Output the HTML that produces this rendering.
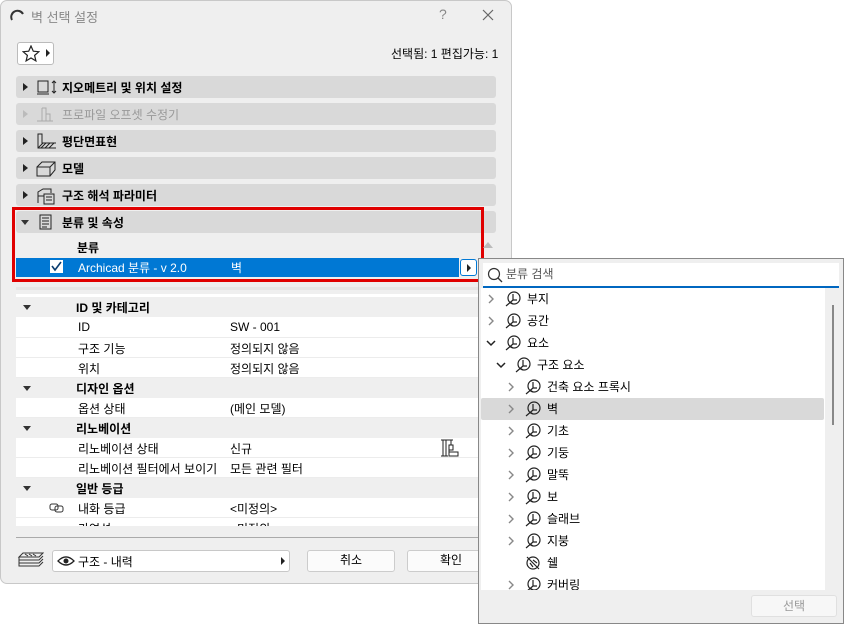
<!DOCTYPE html>
<html><head><meta charset="utf-8"><style>
*{box-sizing:border-box;margin:0;padding:0}
body{width:844px;height:624px;background:#fff;position:relative;overflow:hidden;font-family:"Liberation Sans","Noto Sans CJK KR",sans-serif;font-size:12px;color:#000}
.a{position:absolute}
.dlg{left:0;top:0;width:512px;height:584px;background:#efefef;border:1px solid #c8c8c8;border-radius:7px}
.ph{left:16px;width:480px;height:22px;background:#d9d9d9;border-radius:3px}
.ph .t{position:absolute;left:46px;top:3px;font-weight:bold;font-size:12px}
.tri{position:absolute;left:7px;top:7px;width:0;height:0;border-left:5px solid #222;border-top:4px solid transparent;border-bottom:4px solid transparent}
.trd{position:absolute;width:0;height:0;border-top:5px solid #333;border-left:4px solid transparent;border-right:4px solid transparent}
.row{left:16px;width:462px;height:20px;background:#fff;border-bottom:1px solid #ececec}
.hrow{left:16px;width:462px;height:20px;background:#efefef}
.row span,.hrow span{position:absolute;top:2px}
.li{left:481px;width:343px;height:22px}
.li .chev{position:absolute;top:6px}
.li .ic{position:absolute;top:3px}
.li .tx{position:absolute;top:2px}
</style></head><body>
<div class="a dlg"></div>
<svg class="a" style="left:10px;top:9px" width="14" height="12"><path d="M2 11 A6 6 0 0 1 13 5" stroke="#333" stroke-width="2" fill="none"/></svg>
<div class="a" style="left:31px;top:7px;color:#888;font-size:13px">벽 선택 설정</div>
<div class="a" style="left:439px;top:6px;color:#888;font-size:14px">?</div>
<svg class="a" style="left:482px;top:9px" width="12" height="12"><path d="M1 1L11 11M11 1L1 11" stroke="#666" stroke-width="1.2"/></svg>
<div class="a" style="left:17px;top:42px;width:37px;height:23px;background:#fff;border:1px solid #bbb;border-radius:3px"></div>
<svg class="a" style="left:22px;top:45px" width="18" height="17"><path d="M9 1l2.3 5.2 5.6.5-4.3 3.7 1.3 5.5L9 13l-4.9 2.9 1.3-5.5L1.1 6.7l5.6-.5z" fill="none" stroke="#222" stroke-width="1.2"/></svg>
<div class="a" style="left:46px;top:49px;width:0;height:0;border-left:4px solid #222;border-top:4px solid transparent;border-bottom:4px solid transparent"></div>
<div class="a" style="left:391px;top:45px">선택됨: 1 편집가능: 1</div>
<div class="a ph" style="top:76px"><div class="tri"></div><svg class="a" style="left:20px;top:3px" width="22" height="17"><rect x="2" y="2" width="10" height="11" fill="none" stroke="#222"/><path d="M1 15h12M18 2v12M16 4l2-2 2 2M16 12l2 2 2-2" stroke="#222" fill="none"/></svg><div class="t">지오메트리 및 위치 설정</div></div>
<div class="a ph" style="top:103px"><div class="tri" style="border-left-color:#bbb"></div><svg class="a" style="left:20px;top:3px" width="22" height="17"><path d="M6 2h4v13M6 2v13M1 15h16M10 8h4v7" stroke="#aaa" fill="none"/></svg><div class="t" style="color:#999;font-weight:normal">프로파일 오프셋 수정기</div></div>
<div class="a ph" style="top:130px"><div class="tri"></div><svg class="a" style="left:20px;top:3px" width="22" height="17"><path d="M2 1v14h18M2 15l5-5M5 15l5-5M9 15l5-5M13 15l5-5M2 10V1h4v9h14" stroke="#222" fill="none"/></svg><div class="t">평단면표현</div></div>
<div class="a ph" style="top:157px"><div class="tri"></div><svg class="a" style="left:20px;top:3px" width="22" height="17"><path d="M1 7h13v9H1zM1 7l5-5h13v8l-5 6M14 7l5-5" stroke="#222" fill="none"/></svg><div class="t">모델</div></div>
<div class="a ph" style="top:184px"><div class="tri"></div><svg class="a" style="left:20px;top:3px" width="22" height="18"><path d="M2 16V5l5-3h8v4M2 9h6M8 7h10v10H8zM10 10h6M10 13h6" stroke="#222" fill="none"/></svg><div class="t">구조 해석 파라미터</div></div>
<div class="a ph" style="top:211px"><div class="trd" style="left:5px;top:9px"></div><svg class="a" style="left:22px;top:3px" width="16" height="17"><rect x="2" y="1" width="11" height="14" fill="none" stroke="#222"/><path d="M4 4h7M4 7h7M4 10h7M4 13h5" stroke="#222"/></svg><div class="t">분류 및 속성</div></div>
<div class="a" style="left:77px;top:239px;font-weight:bold">분류</div>
<div class="a" style="left:16px;top:258px;width:443px;height:19px;background:#0078d4"></div>
<div class="a" style="left:50px;top:260px;width:13px;height:13px;background:#fff;border:1px solid #fff"></div>
<svg class="a" style="left:50px;top:260px" width="13" height="13"><path d="M2 6l3 4 6-8" stroke="#0a3c6e" stroke-width="1.6" fill="none"/></svg>
<div class="a" style="left:78px;top:259px;color:#fff">Archicad 분류 - v 2.0</div>
<div class="a" style="left:231px;top:259px;color:#fff">벽</div>
<div class="a" style="left:460px;top:259px;width:17px;height:17px;background:#fff;border:1px solid #0078d4;border-radius:3px"></div>
<div class="a" style="left:467px;top:264px;width:0;height:0;border-left:4px solid #222;border-top:4px solid transparent;border-bottom:4px solid transparent"></div>
<div class="a" style="left:12px;top:207px;width:472px;height:75px;border:3px solid #e00000"></div>
<div class="a" style="left:483px;top:242px;width:0;height:0;border-bottom:6px solid #bbb;border-left:5px solid transparent;border-right:5px solid transparent"></div>
<div class="a" style="left:16px;top:287px;width:462px;height:3px;background:#e6e6e6"></div>
<div class="a" style="left:16px;top:294px;width:462px;height:232px;background:#fff;overflow:hidden"></div>
<div class="a hrow" style="top:297px"><div class="trd" style="left:7px;top:8px"></div><span style="left:60px;font-weight:bold">ID 및 카테고리</span></div>
<div class="a row" style="top:318px"><span style="left:62px">ID</span><span style="left:214px">SW - 001</span></div>
<div class="a row" style="top:338px"><span style="left:62px">구조 기능</span><span style="left:214px">정의되지 않음</span></div>
<div class="a row" style="top:358px"><span style="left:62px">위치</span><span style="left:214px">정의되지 않음</span></div>
<div class="a hrow" style="top:378px"><div class="trd" style="left:7px;top:8px"></div><span style="left:60px;font-weight:bold">디자인 옵션</span></div>
<div class="a row" style="top:398px"><span style="left:62px">옵션 상태</span><span style="left:214px">(메인 모델)</span></div>
<div class="a hrow" style="top:418px"><div class="trd" style="left:7px;top:8px"></div><span style="left:60px;font-weight:bold">리노베이션</span></div>
<div class="a row" style="top:438px"><span style="left:62px">리노베이션 상태</span><span style="left:214px">신규</span><svg class="a" style="left:424px;top:1px" width="20" height="18"><path d="M1 1h12M3 1v16M6 1v16M1 17h7M11 1v5M9 6h4v5h-4zM9 11v6h9v-4h-9" stroke="#222" fill="none"/></svg></div>
<div class="a row" style="top:458px"><span style="left:62px">리노베이션 필터에서 보이기</span><span style="left:214px">모든 관련 필터</span></div>
<div class="a hrow" style="top:478px"><div class="trd" style="left:7px;top:8px"></div><span style="left:60px;font-weight:bold">일반 등급</span></div>
<div class="a row" style="top:498px"><svg class="a" style="left:33px;top:5px" width="16" height="10"><rect x="1" y="1" width="8" height="6" rx="2" fill="none" stroke="#333"/><rect x="6" y="3" width="8" height="6" rx="2" fill="none" stroke="#333"/></svg><span style="left:62px">내화 등급</span><span style="left:214px">&lt;미정의&gt;</span></div>
<div class="a" style="left:16px;top:518px;width:462px;height:8px;background:#fff;overflow:hidden"><span class="a" style="left:62px;top:2px">가연성</span><span class="a" style="left:214px;top:2px">&lt;미정의&gt;</span></div>
<div class="a" style="left:16px;top:537px;width:462px;height:1px;background:#aaa"></div>
<svg class="a" style="left:17px;top:551px" width="27" height="20"><path d="M6 2h20l-4 4H2zM2 6v3h20l4-4M2 9v3h20l4-4M2 12v3h20l4-4M8 3l3 2M12 3l3 2M16 3l3 2" stroke="#333" fill="none"/></svg>
<div class="a" style="left:52px;top:550px;width:238px;height:22px;background:#fff;border:1px solid #c8c8c8;border-radius:3px"></div>
<svg class="a" style="left:57px;top:555px" width="18" height="12"><path d="M1 6Q9-2 17 6Q9 14 1 6z" fill="none" stroke="#222" stroke-width="1.3"/><circle cx="9" cy="6" r="2.5" fill="#222"/></svg>
<div class="a" style="left:78px;top:553px">구조 - 내력</div>
<div class="a" style="left:281px;top:557px;width:0;height:0;border-left:4px solid #222;border-top:4px solid transparent;border-bottom:4px solid transparent"></div>
<div class="a" style="left:307px;top:550px;width:88px;height:22px;background:#fbfbfb;border:1px solid #ccc;border-radius:3px;text-align:center;line-height:19px">취소</div>
<div class="a" style="left:407px;top:550px;width:88px;height:22px;background:#fbfbfb;border:1px solid #ccc;border-radius:3px;text-align:center;line-height:19px">확인</div>
<div class="a" style="left:478px;top:258px;width:366px;height:366px;background:#efefef;border:1px solid #888"></div>
<div class="a" style="left:483px;top:263px;width:356px;height:25px;background:#fff;border-bottom:2px solid #0067c0"></div>
<svg class="a" style="left:487px;top:267px" width="16" height="16"><circle cx="7" cy="7" r="5.5" fill="none" stroke="#333" stroke-width="1.2"/><path d="M11 11l4 4" stroke="#333" stroke-width="1.3"/></svg>
<div class="a" style="left:506px;top:265px;color:#555">분류 검색</div>
<div class="a" style="left:481px;top:288px;width:344px;height:302px;background:#fff;overflow:hidden">
<div class="a" style="left:0;top:110px;width:343px;height:22px;background:#d9d9d9;border-radius:2px"></div>
</div>
<div class="a" style="left:832px;top:305px;width:2px;height:120px;background:#888"></div>
<div class="a" style="left:751px;top:595px;width:86px;height:22px;background:#f7f7f7;border:1px solid #e0e0e0;border-radius:3px;text-align:center;line-height:20px;color:#999">선택</div>
<svg width="0" height="0" style="position:absolute"><defs>
<g id="ci"><circle cx="9" cy="7" r="6" fill="none" stroke="#222" stroke-width="1.2"/><path d="M1 15L8 9M8 3v6h4M5 11l3 2" stroke="#222" stroke-width="1.2" fill="none"/></g>
<path id="cr" d="M1 1l4 4-4 4" stroke="#888" stroke-width="1.4" fill="none"/>
<path id="cd" d="M1 1l4 4 4-4" stroke="#222" stroke-width="1.5" fill="none"/>
</defs></svg>
<div class="a" style="left:481px;top:288px;width:344px;height:302px;overflow:hidden">
<div class="a li" style="left:0;top:0"><svg class="chev" style="left:7px" width="8" height="11"><use href="#cr"/></svg><svg class="ic" style="left:24px" width="17" height="16"><use href="#ci"/></svg><span class="tx" style="left:46px">부지</span></div>
<div class="a li" style="left:0;top:22px"><svg class="chev" style="left:7px" width="8" height="11"><use href="#cr"/></svg><svg class="ic" style="left:24px" width="17" height="16"><use href="#ci"/></svg><span class="tx" style="left:46px">공간</span></div>
<div class="a li" style="left:0;top:44px"><svg class="chev" style="left:5px;top:8px" width="11" height="8"><use href="#cd"/></svg><svg class="ic" style="left:24px" width="17" height="16"><use href="#ci"/></svg><span class="tx" style="left:46px">요소</span></div>
<div class="a li" style="left:0;top:66px"><svg class="chev" style="left:15px;top:8px" width="11" height="8"><use href="#cd"/></svg><svg class="ic" style="left:34px" width="17" height="16"><use href="#ci"/></svg><span class="tx" style="left:56px">구조 요소</span></div>
<div class="a li" style="left:0;top:88px"><svg class="chev" style="left:27px" width="8" height="11"><use href="#cr"/></svg><svg class="ic" style="left:44px" width="17" height="16"><use href="#ci"/></svg><span class="tx" style="left:66px">건축 요소 프록시</span></div>
<div class="a li" style="left:0;top:110px"><svg class="chev" style="left:27px" width="8" height="11"><use href="#cr"/></svg><svg class="ic" style="left:44px" width="17" height="16"><use href="#ci"/></svg><span class="tx" style="left:66px">벽</span></div>
<div class="a li" style="left:0;top:132px"><svg class="chev" style="left:27px" width="8" height="11"><use href="#cr"/></svg><svg class="ic" style="left:44px" width="17" height="16"><use href="#ci"/></svg><span class="tx" style="left:66px">기초</span></div>
<div class="a li" style="left:0;top:154px"><svg class="chev" style="left:27px" width="8" height="11"><use href="#cr"/></svg><svg class="ic" style="left:44px" width="17" height="16"><use href="#ci"/></svg><span class="tx" style="left:66px">기둥</span></div>
<div class="a li" style="left:0;top:176px"><svg class="chev" style="left:27px" width="8" height="11"><use href="#cr"/></svg><svg class="ic" style="left:44px" width="17" height="16"><use href="#ci"/></svg><span class="tx" style="left:66px">말뚝</span></div>
<div class="a li" style="left:0;top:198px"><svg class="chev" style="left:27px" width="8" height="11"><use href="#cr"/></svg><svg class="ic" style="left:44px" width="17" height="16"><use href="#ci"/></svg><span class="tx" style="left:66px">보</span></div>
<div class="a li" style="left:0;top:220px"><svg class="chev" style="left:27px" width="8" height="11"><use href="#cr"/></svg><svg class="ic" style="left:44px" width="17" height="16"><use href="#ci"/></svg><span class="tx" style="left:66px">슬래브</span></div>
<div class="a li" style="left:0;top:242px"><svg class="chev" style="left:27px" width="8" height="11"><use href="#cr"/></svg><svg class="ic" style="left:44px" width="17" height="16"><use href="#ci"/></svg><span class="tx" style="left:66px">지붕</span></div>
<div class="a li" style="left:0;top:264px"><svg class="ic" style="left:44px" width="17" height="16"><circle cx="8" cy="8" r="6" fill="none" stroke="#222" stroke-width="1.2"/><path d="M2 2L14 14M5 8l3 4M8 5l4 3" stroke="#222" stroke-width="1.2"/></svg><span class="tx" style="left:66px">쉘</span></div>
<div class="a li" style="left:0;top:286px"><svg class="chev" style="left:27px" width="8" height="11"><use href="#cr"/></svg><svg class="ic" style="left:44px" width="17" height="16"><use href="#ci"/></svg><span class="tx" style="left:66px">커버링</span></div>
</div>
</body></html>
